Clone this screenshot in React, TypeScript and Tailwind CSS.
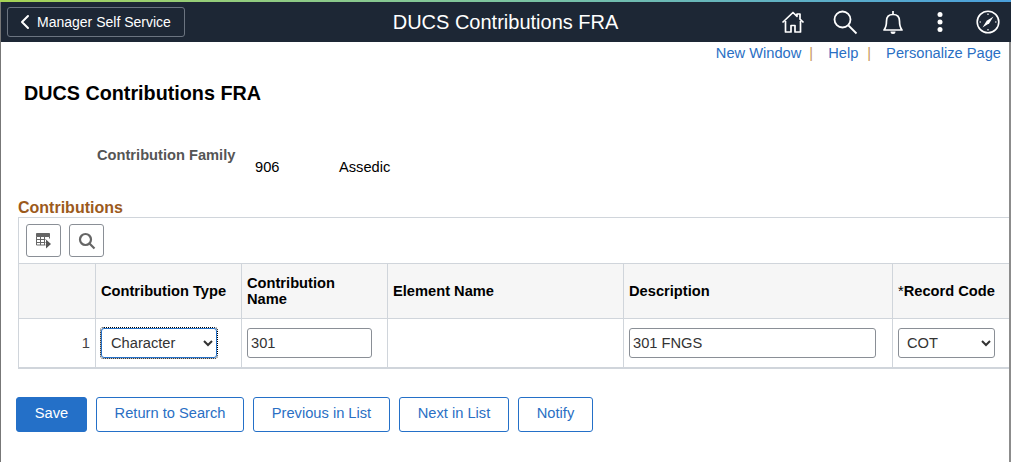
import React from 'react';
import { ChevronLeft } from 'lucide-react';

const font = "font-['Liberation_Sans',Arial,sans-serif]";
const blue = 'text-[#2a6fc4]';

function HeaderIcons() {
  return (
    <div className="flex items-center text-white">
      <svg width="24" height="24" viewBox="0 0 24 24" fill="none" stroke="currentColor" strokeWidth="1.7" className="mr-[27px]">
        <path d="M1.500 12.500 12 2.500l4 3.800V4h3v5.200l3.500 3.300" strokeLinejoin="round" />
        <path d="M4.500 11v11h5.500v-6.500h4V22h5.500V11" strokeLinejoin="round" />
      </svg>
      <svg width="26" height="26" viewBox="0 0 26 26" fill="none" stroke="currentColor" strokeWidth="1.8" className="mr-[24px]">
        <circle cx="10.500" cy="10.500" r="8" />
        <path d="m16.500 16.500 8 8" />
      </svg>
      <svg width="22" height="26" viewBox="0 0 22 26" fill="none" stroke="currentColor" strokeWidth="1.7" className="mr-[32px]">
        <path d="M2 21c2-2.500 2.500-5 2.500-9 0-4 2.500-6.500 6.500-6.500s6.500 2.500 6.500 6.500c0 4 .5 6.500 2.500 9z" strokeLinejoin="round" />
        <path d="M11 2v3" />
        <path d="M8.500 22.500h5a2.500 2.500 0 0 1-5 0z" fill="currentColor" stroke="none" />
      </svg>
      <svg width="8" height="22" viewBox="0 0 8 22" fill="currentColor" className="mr-[32px]">
        <circle cx="4" cy="3.500" r="2.500" />
        <circle cx="4" cy="11" r="2.500" />
        <circle cx="4" cy="18.500" r="2.500" />
      </svg>
      <svg width="24" height="24" viewBox="0 0 24 24" fill="none" stroke="currentColor" strokeWidth="1.600" className="mr-[11px]">
        <circle cx="12" cy="12" r="10.800" />
        <path d="M12 3.500v1.500M12 19v1.500M3.500 12H5M19 12h1.500" strokeWidth="1.200" />
        <path d="M17.500 6.500 13.300 13.300 6.500 17.500l4.200-6.800z" fill="currentColor" stroke="none" />
      </svg>
    </div>
  );
}

function Th({ children, last }: { children?: React.ReactNode; last?: boolean }) {
  return (
    <div className={`flex items-center px-[5px] text-[14.67px] leading-4 font-bold text-black bg-[#f6f6f6] border-b border-[#d0d5db] ${last ? 'whitespace-nowrap' : 'border-r'}`}>
      <div>{children}</div>
    </div>
  );
}

function Td({ children, last, className = '' }: { children?: React.ReactNode; last?: boolean; className?: string }) {
  return (
    <div className={`flex items-center px-[5px] border-[#d0d5db] ${last ? '' : 'border-r'} ${className}`}>
      {children}
    </div>
  );
}

function Btn({ children, w, primary }: { children: React.ReactNode; w: string; primary?: boolean }) {
  return (
    <button className={`h-[35px] ${w} rounded-[3px] border border-[#2470c8] pb-[3px] text-[14.67px] ${primary ? 'bg-[#2470c8] text-white' : `bg-white ${blue}`}`}>
      {children}
    </button>
  );
}

export default function App() {
  return (
    <div className={`${font} relative h-[462px] w-[1011px] overflow-hidden bg-white text-[14.67px] text-black`}>
      <div className="h-[2px] bg-gradient-to-r from-[#a6d354] via-[#7cc4a0] to-[#4a9fdc]" />
      <div className="flex h-[40px] items-center justify-between bg-[#1d2735] pl-[7px]">
        <button className="flex h-[30px] w-[178px] items-center rounded-[3px] border border-[#6b7480] pl-[9px] text-sm text-white">
          <ChevronLeft size={24} strokeWidth={2} className="-ml-[4px]" />
          Manager Self Service
        </button>
        <div className="absolute left-0 right-0 top-[2px] flex h-[40px] items-center justify-center pointer-events-none">
          <span className="text-xl text-white">DUCS Contributions FRA</span>
        </div>
        <HeaderIcons />
      </div>

      <div className="flex justify-end pr-[10px] pt-[3px] h-[18px] leading-4">
        <a className={blue}>New Window</a>
        <span className="ml-[8px] mr-[15px] text-[#c8965a]">|</span>
        <a className={blue}>Help</a>
        <span className="ml-[9px] mr-[15px] text-[#c8965a]">|</span>
        <a className={blue}>Personalize Page</a>
      </div>

      <h1 className="ml-[24px] mt-[21px] text-[19.75px] leading-6 font-bold">DUCS Contributions FRA</h1>

      <div className="mt-[42px] flex h-[32px] items-start">
        <span className="ml-[97px] w-[158px] font-bold leading-4 text-[#555]">Contribution Family</span>
        <span className="mt-[12px] w-[84px] leading-4">906</span>
        <span className="mt-[12px] leading-4">Assedic</span>
      </div>

      <h2 className="ml-[18px] mt-[20px] text-base leading-[18px] font-bold text-[#9c5a1c]">Contributions</h2>

      <div className="ml-[18px] w-[992px] border-t border-[#d0d5db]">
        <div className="flex h-[46px] gap-[8px] border-l border-b border-[#d0d5db] pl-[7px] pt-[6px]">
          <button className="flex h-[33px] w-[35px] items-center justify-center rounded-[3px] border border-[#8a8f96]">
            <svg width="17" height="17" viewBox="0 0 17 17" fill="none" stroke="#666" strokeWidth="1">
              <path d="M1.500 1.500h13v3h-13z" fill="#666" />
              <path d="M1.500 4.500v8.500h9M1.500 7.500h9M1.500 10.500h9M5.500 4.500V13M9.500 4.500V13M14.500 4.500v2" />
              <path d="M11 7.500v9l5-4.500z" fill="#555" stroke="none" />
            </svg>
          </button>
          <button className="flex h-[33px] w-[35px] items-center justify-center rounded-[3px] border border-[#8a8f96]">
            <svg width="18" height="18" viewBox="0 0 18 18" fill="none" stroke="#666" strokeWidth="2.200">
              <circle cx="7.500" cy="7.500" r="5.500" />
              <path d="m11.500 11.500 5 5" />
            </svg>
          </button>
        </div>

        <div className="grid grid-cols-[77px_146px_146px_236px_269px_118px] grid-rows-[55px_48px] border-l border-b-2 border-[#d0d5db]">
          <Th />
          <Th>Contribution Type</Th>
          <Th>Contribution<br />Name</Th>
          <Th>Element Name</Th>
          <Th>Description</Th>
          <Th last><span className="font-normal">*</span>Record Code</Th>

          <Td className="justify-end text-[#444]">1</Td>
          <Td>
            <select defaultValue="Character" className="h-[30px] w-[116px] rounded-[3px] border border-[#2470c8] bg-white pl-[5px] pr-[3px] text-[14.67px] text-[#333] outline-1 outline-dotted outline-black">
              <option>Character</option>
            </select>
          </Td>
          <Td>
            <input defaultValue="301" className="h-[30px] w-[125px] rounded-[3px] border border-[#8a8f96] px-[3px] text-[14.67px] text-[#333]" />
          </Td>
          <Td />
          <Td>
            <input defaultValue="301 FNGS" className="h-[30px] w-[247px] rounded-[3px] border border-[#8a8f96] px-[3px] text-[14.67px] text-[#333]" />
          </Td>
          <Td last>
            <select defaultValue="COT" className="h-[30px] w-[97px] rounded-[3px] border border-[#8a8f96] bg-white pl-[4px] pr-[2px] text-[14.67px] text-[#333]">
              <option>COT</option>
            </select>
          </Td>
        </div>
      </div>

      <div className="ml-[16px] mt-[28px] flex gap-[9px]">
        <Btn w="w-[71px]" primary>Save</Btn>
        <Btn w="w-[148px]">Return to Search</Btn>
        <Btn w="w-[137px]">Previous in List</Btn>
        <Btn w="w-[110px]">Next in List</Btn>
        <Btn w="w-[75px]">Notify</Btn>
      </div>

      <div className="absolute bottom-0 left-0 top-[2px] w-px bg-[#777]" />
      <div className="absolute bottom-0 left-[1009px] top-[42px] w-[2px] bg-[#8c8c8c]" />
    </div>
  );
}
